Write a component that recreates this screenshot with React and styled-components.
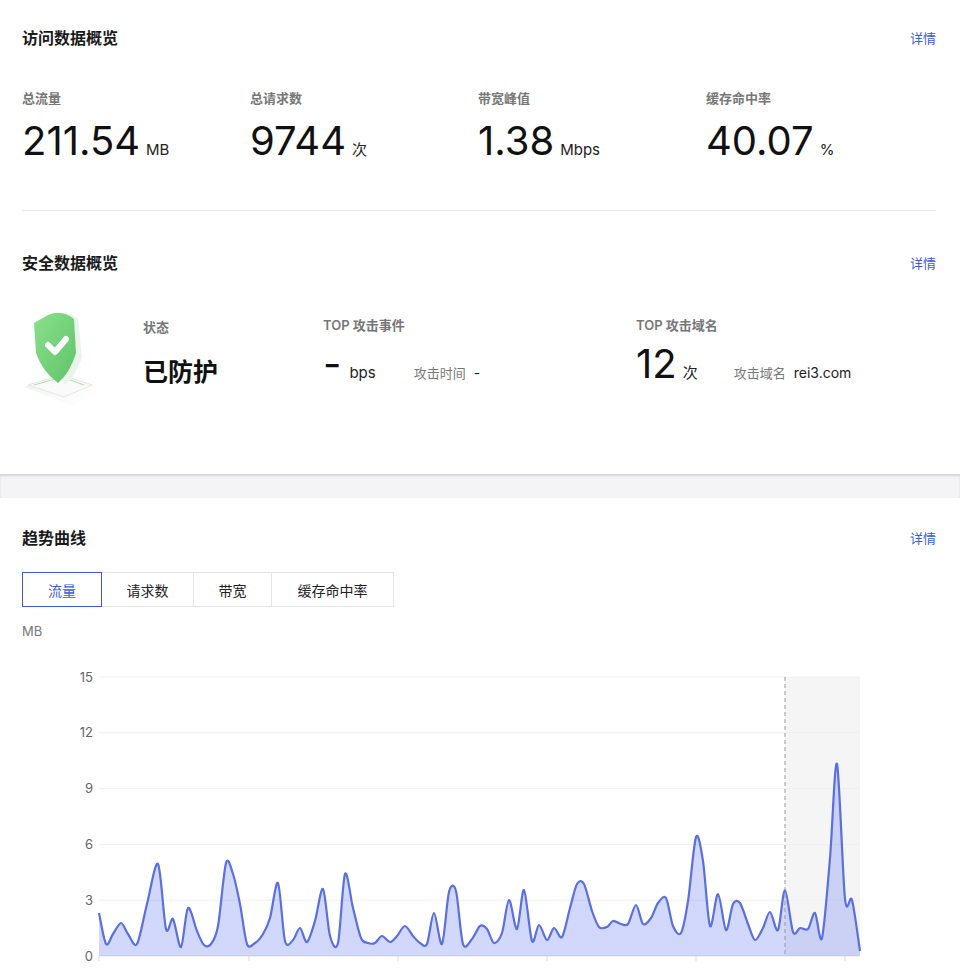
import React from "react";
import styled, { createGlobalStyle } from "styled-components";

const G = createGlobalStyle`
  body { margin:0; background:#fff; font-family: Inter, "Noto Sans CJK SC", sans-serif; color:#1a1a1a; }
`;
const Card = styled.div`background:#fff; padding:${p => p.$pad || "22px 24px 0 22px"};`;
const Gap = styled.div`height:24px; background:#f4f4f6; box-shadow: inset 0 2px 2px rgba(0,0,0,0.12);`;
const Head = styled.div`display:flex; justify-content:space-between; align-items:center; height:30px; margin-top:${p => p.$mt || 0}px;`;
const Title = styled.div`font-size:16px; font-weight:700; color:#1a1a1a;`;
const More = styled.a`font-size:13px; color:#3b5bdb; cursor:pointer;`;
const Stats = styled.div`display:grid; grid-template-columns:repeat(4,228px); margin-top:36px; padding-bottom:45px; border-bottom:1px solid #e8e8e8;`;
const Label = styled.div`font-size:13px; font-weight:600; color:#777;`;
const Value = styled.div`display:flex; align-items:baseline; gap:6px; margin-top:10px;`;
const Big = styled.span`font-size:${p => p.$s || 40}px; color:#111; line-height:48px; font-weight:${p => p.$b ? 700 : 400};`;
const Unit = styled.span`font-size:15px; color:#222; margin-left:${p => p.$ml || 0}px;`;
const Sec = styled.div`display:flex; align-items:flex-start; height:169px; margin-top:28px;`;
const Col = styled.div`width:${p => p.$w}px; padding-top:${p => p.$t || 0}px;`;
const Row = styled.div`display:flex; align-items:baseline; margin-top:${p => p.$m || 10}px;`;
const Small = styled.span`font-size:13px; color:#777; margin-left:${p => p.$ml || 0}px;`;
const Dark = styled.span`font-size:14px; color:#222; margin-left:8px;`;
const Tabs = styled.div`display:flex; margin-top:20px;`;
const Tab = styled.div`height:35px; width:${p => p.$w}px; box-sizing:border-box; display:flex; align-items:center; justify-content:center; font-size:14px;
  color:${p => p.$on ? "#3b5bdb" : "#222"}; border:1px solid ${p => p.$on ? "#3b5bdb" : "#e6e6e6"}; margin-left:${p => p.$on ? 0 : -1}px; position:relative; z-index:${p => p.$on ? 1 : 0};`;
const Axis = styled.div`font-size:13px; color:#777; margin-top:16px;`;
const ChartSvg = styled.svg`display:block; margin-left:-22px; margin-top:17px;`;

const pts = [[99,912],[106,943],[113,933],[121,922],[128,933],[137,943],[147,903],[158,863],[166,928],[173,918],[181,946],[188,907],[197,930],[204,944],[211,943],[218,925],[226,862],[233,873],[240,903],[247,943],[255,942],[263,933],[270,917],[278,882],[285,940],[293,939],[300,927],[307,941],[315,920],[323,888],[330,935],[338,942],[345,873],[353,907],[361,937],[368,942],[375,942],[382,935],[390,941],[397,935],[405,925],[413,935],[420,942],[427,943],[434,912],[442,943],[449,891],[456,890],[463,943],[472,938],[480,925],[487,928],[494,942],[502,932],[509,899],[517,928],[524,889],[532,940],[539,924],[547,939],[554,927],[562,936],[570,907],[577,883],[584,883],[592,910],[599,926],[607,926],[613,920],[621,923],[628,923],[636,904],[643,923],[651,917],[658,902],[666,897],[673,925],[681,932],[688,900],[696,836],[703,860],[710,925],[718,893],[726,929],[733,903],[740,902],[748,923],[755,939],[763,927],[770,911],[778,929],[785,889],[793,931],[800,927],[808,928],[815,912],[822,937],[830,857],[837,763],[845,898],[852,899],[860,950]];

function smooth(p) {
  let d = `M${p[0][0]},${p[0][1]}`;
  for (let i = 0; i < p.length - 1; i++) {
    const p0 = p[i - 1] || p[i], p1 = p[i], p2 = p[i + 1], p3 = p[i + 2] || p2;
    const t = 0.15;
    d += ` C${p1[0] + (p2[0] - p0[0]) * t},${p1[1] + (p2[1] - p0[1]) * t} ${p2[0] - (p3[0] - p1[0]) * t},${p2[1] - (p3[1] - p1[1]) * t} ${p2[0]},${p2[1]}`;
  }
  return d;
}

function Chart() {
  const line = smooth(pts);
  const ys = [15, 12, 9, 6, 3, 0];
  return (
    <ChartSvg width="960" height="320" viewBox="0 655 960 320">
      <rect x="785" y="676" width="75" height="279" fill="#f5f5f5" />
      {ys.map(v => {
        const y = 955 - v * 18.6;
        return (
          <g key={v}>
            <line x1="99" x2="860" y1={y} y2={y} stroke={v === 0 ? "#e4e4ee" : "#f0f0f0"} />
            <text x="93" y={y + 4.5} textAnchor="end" fontSize="13" fill="#666" fontFamily="Inter, sans-serif">{v}</text>
          </g>
        );
      })}
      {[99, 249, 398, 547, 696, 845].map(x => <line key={x} x1={x} x2={x} y1="955" y2="960" stroke="#ddd" />)}
      <path d={`${line} L860,955 L99,955 Z`} fill="#5b73f0" fillOpacity="0.28" />
      <path d={line} fill="none" stroke="#5a6fe0" strokeWidth="2.2" />
      <line x1="785" x2="785" y1="676" y2="955" stroke="#999" strokeDasharray="4 3" />
    </ChartSvg>
  );
}

function Shield() {
  return (
    <svg width="92" height="104" viewBox="0 0 92 104">
      <defs>
        <linearGradient id="sg" x1="0" y1="0" x2="1" y2="1">
          <stop offset="0" stopColor="#8be08c" />
          <stop offset="1" stopColor="#5fc36a" />
        </linearGradient>
        <linearGradient id="pg" x1="0" y1="0" x2="1" y2="0">
          <stop offset="0" stopColor="#f2f2f2" />
          <stop offset="1" stopColor="#fff" stopOpacity="0" />
        </linearGradient>
      </defs>
      <path d="M2 82 L40 68 L92 82 L50 100 Z" fill="url(#pg)" />
      <path d="M6 80 L40 70 L70 80 L42 92 Z" fill="#fafafa" stroke="#e6e6e6" />
      <path d="M12 80 L40 72 L62 80" fill="none" stroke="#a8e0a8" strokeWidth="1" />
      <path d="M30 10 Q45 4 56 14 L60 52 Q54 72 42 80 Q40 60 36 40 Z" fill="#e9f5ea" />
      <path d="M26 10 Q40 4 52 14 L54 48 Q48 68 36 78 Q20 66 14 48 L12 18 Z" fill="url(#sg)" />
      <path d="M26 40 L33 47 L44 34" fill="none" stroke="#fff" strokeWidth="6" strokeLinecap="round" strokeLinejoin="round" />
    </svg>
  );
}

export default function App() {
  return (
    <>
      <G />
      <Card>
        <Head><Title>访问数据概览</Title><More>详情</More></Head>
        <Stats>
          <div><Label>总流量</Label><Value><Big>211.54</Big><Unit>MB</Unit></Value></div>
          <div><Label>总请求数</Label><Value><Big>9744</Big><Unit>次</Unit></Value></div>
          <div><Label>带宽峰值</Label><Value><Big>1.38</Big><Unit>Mbps</Unit></Value></div>
          <div><Label>缓存命中率</Label><Value><Big>40.07</Big><Unit>%</Unit></Value></div>
        </Stats>
        <Head $mt={36}><Title>安全数据概览</Title><More>详情</More></Head>
        <Sec>
          <Col $w={121} $t={0}><Shield /></Col>
          <Col $w={180} $t={12}><Label>状态</Label><Row $m={12}><Big $s={25} $b>已防护</Big></Row></Col>
          <Col $w={313} $t={10}><Label>TOP 攻击事件</Label><Row $m={6}><Big>-</Big><Unit $ml={8}>bps</Unit><Small $ml={38}>攻击时间</Small><Dark>-</Dark></Row></Col>
          <Col $w={280} $t={10}><Label>TOP 攻击域名</Label><Row $m={6}><Big>12</Big><Unit $ml={6}>次</Unit><Small $ml={36}>攻击域名</Small><Dark>rei3.com</Dark></Row></Col>
        </Sec>
      </Card>
      <Gap />
      <Card $pad="24px 24px 0 22px">
        <Head><Title>趋势曲线</Title><More>详情</More></Head>
        <Tabs>
          <Tab $w={80} $on>流量</Tab>
          <Tab $w={93}>请求数</Tab>
          <Tab $w={79}>带宽</Tab>
          <Tab $w={123}>缓存命中率</Tab>
        </Tabs>
        <Axis>MB</Axis>
        <Chart />
      </Card>
    </>
  );
}
